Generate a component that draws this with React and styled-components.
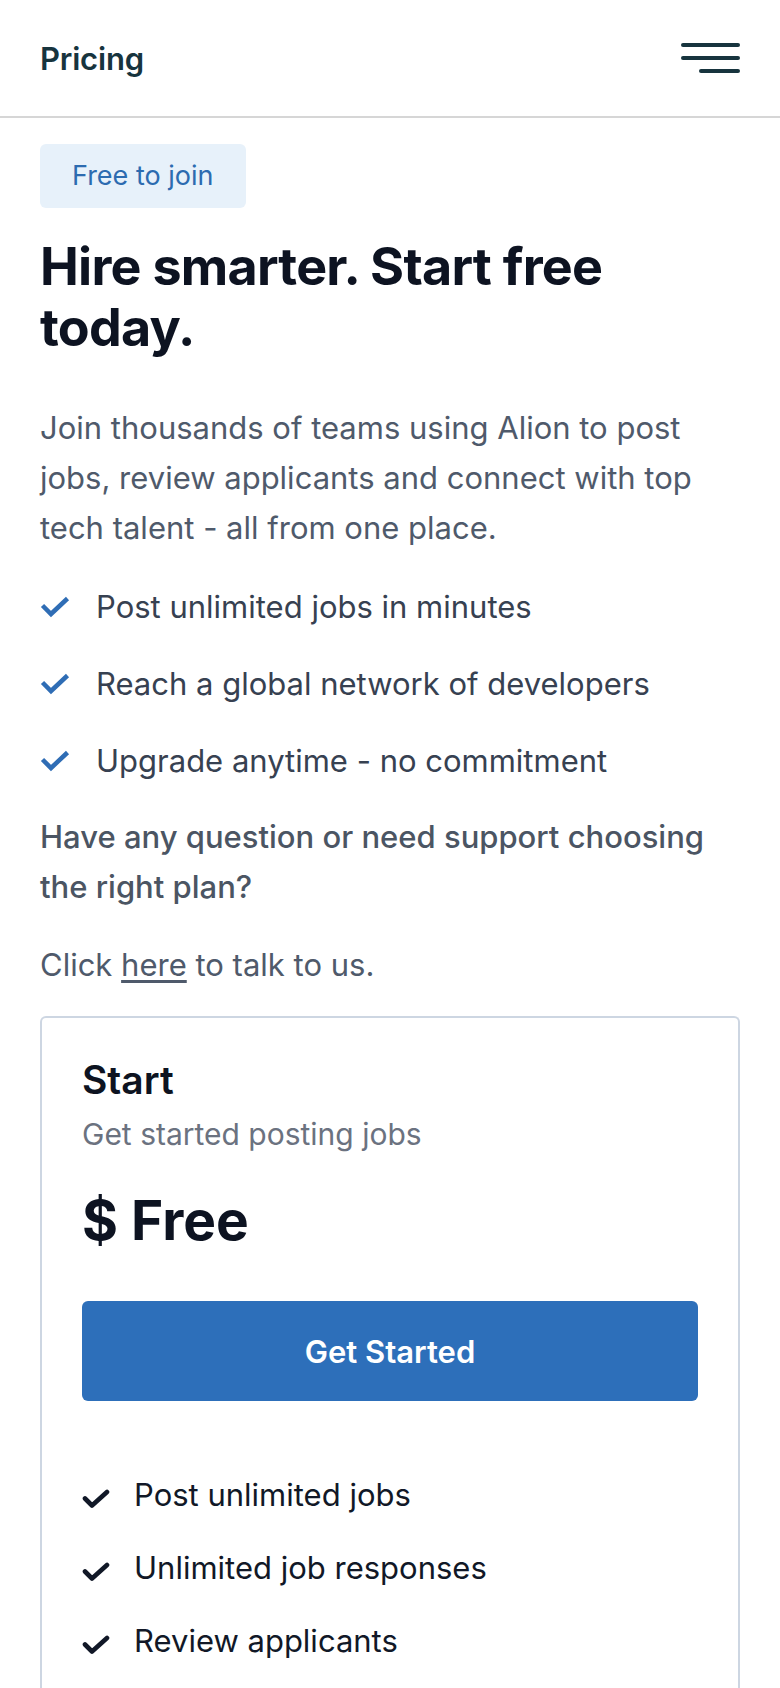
import React from 'react';
import styled, { createGlobalStyle } from 'styled-components';

const Global = createGlobalStyle`
  * { box-sizing: border-box; }
  body {
    margin: 0;
    background: #ffffff;
    font-family: Inter, "Noto Sans", sans-serif;
  }
`

const Header = styled.header`
  height: 118px;
  padding: 0 40px;
  display: flex;
  justify-content: space-between;
  align-items: center;
  border-bottom: 2px solid #d6d6d6;
`

const Title = styled.h2`
  margin: 0;
  font-size: 31px;
  font-weight: 600;
  color: #17343e;
  letter-spacing: -0.2px;
`

const Burger = styled.button`
  width: 59px;
  height: 30px;
  padding: 0;
  border: 0;
  background: none;
  display: flex;
  flex-direction: column;
  justify-content: space-between;
  align-items: flex-end;
`

const BurgerLine = styled.span`
  display: block;
  height: 4px;
  border-radius: 2px;
  background: #17343e;
  width: ${p => p.$short ? '41px' : '59px'};
`

const Main = styled.main`
  padding: 26px 40px 0;
`

const Badge = styled.span`
  display: inline-block;
  height: 64px;
  line-height: 64px;
  padding: 0 32px;
  border-radius: 6px;
  background: #e7f1fa;
  color: #2c6bb0;
  font-size: 27px;
`

const Heading = styled.h1`
  margin: 28px 0 0;
  font-size: 52px;
  line-height: 61px;
  font-weight: 700;
  color: #0d1321;
  letter-spacing: -0.75px;
`

const Lead = styled.p`
  margin: 45px 0 0;
  font-size: 31px;
  line-height: 50px;
  color: #4f5a6b;
`

const Perks = styled.ul`
  list-style: none;
  margin: 29px 0 0;
  padding: 0;
  display: flex;
  flex-direction: column;
  gap: 27px;
`

const Perk = styled.li`
  display: flex;
  align-items: center;
  gap: ${p => p.$dark ? '24px' : '26px'};
  font-size: 31px;
  line-height: 50px;
  color: ${p => p.$dark ? '#111827' : '#374151'};

  svg {
    flex: none;
    margin-top: ${p => p.$dark ? '8px' : '0'};
  }
`

const Question = styled.p`
  margin: 26px 0 0;
  font-size: 31px;
  line-height: 50px;
  font-weight: 500;
  color: #4b5563;
`

const Contact = styled.p`
  margin: 28px 0 0;
  font-size: 31px;
  line-height: 50px;
  color: #4f5a6b;

  a {
    color: inherit;
    text-decoration: underline;
    text-underline-offset: 4px;
  }
`

const Card = styled.section`
  margin-top: 26px;
  border: 2px solid #cdd6e2;
  border-bottom: 0;
  border-radius: 6px 6px 0 0;
  padding: 38px 40px 60px;
`

const PlanName = styled.h3`
  margin: 0;
  font-size: 39px;
  line-height: 48px;
  font-weight: 600;
  color: #0d1321;
`

const PlanNote = styled.p`
  margin: 10px 0 0;
  font-size: 30px;
  line-height: 40px;
  color: #6b7280;
`

const Price = styled.div`
  margin-top: 31px;
  font-size: 55px;
  line-height: 70px;
  font-weight: 700;
  color: #0d1321;
`

const CTA = styled.button`
  margin-top: 46px;
  width: 100%;
  height: 100px;
  border: 0;
  border-radius: 6px;
  background: #2d6fba;
  color: #ffffff;
  font-family: inherit;
  font-size: 31px;
  font-weight: 600;
`

const Features = styled(Perks)`
  margin-top: 69px;
  gap: 23px;
`

const BlueCheck = () => (
  <svg width="30" height="22" viewBox="0 0 30 22" fill="none" stroke="#2f6db5" strokeWidth="4.5" strokeLinecap="butt" strokeLinejoin="miter">
    <polyline points="2.5 9.5 11 18 27.5 2.5" />
  </svg>
)

const DarkCheck = () => (
  <svg width="28" height="20" viewBox="0 0 28 20" fill="none" stroke="#111827" strokeWidth="4.6" strokeLinecap="round" strokeLinejoin="round">
    <polyline points="3 9.5 10 16.5 25 3" />
  </svg>
)

const perks = [
  'Post unlimited jobs in minutes',
  'Reach a global network of developers',
  'Upgrade anytime - no commitment',
]

const features = [
  'Post unlimited jobs',
  'Unlimited job responses',
  'Review applicants',
]

export default function App() {
  return (
    <>
      <Global />
      <Header>
        <Title>Pricing</Title>
        <Burger aria-label="menu">
          <BurgerLine />
          <BurgerLine />
          <BurgerLine $short />
        </Burger>
      </Header>
      <Main>
        <Badge>Free to join</Badge>
        <Heading>Hire smarter. Start free today.</Heading>
        <Lead>
          Join thousands of teams using Alion to post jobs, review applicants and connect with top tech talent - all from one place.
        </Lead>
        <Perks>
          {perks.map(t => (
            <Perk key={t}>
              <BlueCheck />
              {t}
            </Perk>
          ))}
        </Perks>
        <Question>Have any question or need support choosing the right plan?</Question>
        <Contact>Click <a href="#">here</a> to talk to us.</Contact>
        <Card>
          <PlanName>Start</PlanName>
          <PlanNote>Get started posting jobs</PlanNote>
          <Price>$ Free</Price>
          <CTA>Get Started</CTA>
          <Features>
            {features.map(t => (
              <Perk key={t} $dark>
                <DarkCheck />
                {t}
              </Perk>
            ))}
          </Features>
        </Card>
      </Main>
    </>
  )
}
